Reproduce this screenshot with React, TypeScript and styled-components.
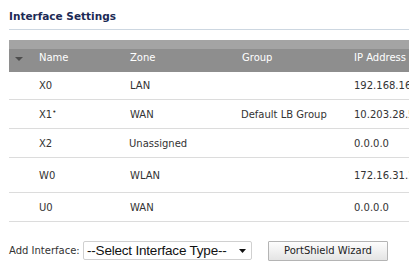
import React from "react";
import styled, { createGlobalStyle } from "styled-components";

const Global = createGlobalStyle`
  html, body { margin: 0; padding: 0; background: #ffffff; }
  body { font-family: "DejaVu Sans", Tahoma, sans-serif; }
`;

const Page = styled.div`
  width: 409px;
  height: 278px;
  padding-left: 9px;
  box-sizing: border-box;
  overflow: hidden;
`;

const Title = styled.h1`
  margin: 0;
  padding-top: 9px;
  height: 20px;
  box-sizing: content-box;
  border-bottom: 1px solid #cdd7e1;
  font-size: 10.5px;
  font-weight: bold;
  line-height: 14px;
  color: #1c2a55;
`;

const Table = styled.div`
  margin-top: 10px;
`;

const cols = "30px 91px 112px 112px 1fr";

const HeaderRow = styled.div`
  display: grid;
  grid-template-columns: ${cols};
  align-items: center;
  height: 32px;
  padding-top: 2px;
  box-sizing: border-box;
  background: linear-gradient(#a4a4a4 0, #a4a4a4 9px, #8e8e8e 9px, #8e8e8e 100%);
  color: #ffffff;
  font-size: 10px;
  white-space: nowrap;
`;

const SortIcon = styled.svg`
  margin-left: 6px;
  margin-top: 4px;
  display: block;
`;

const Row = styled.div<{ $h: number }>`
  display: grid;
  grid-template-columns: ${cols};
  align-items: center;
  height: ${(p) => p.$h}px;
  box-sizing: border-box;
  border-bottom: 1px solid #dcdcdc;
  color: #333333;
  font-size: 10px;
  white-space: nowrap;
  overflow: hidden;
`;

const Cell = styled.span<{ $shift?: number }>`
  margin-left: ${(p) => p.$shift ?? 0}px;
`;

const Controls = styled.div`
  display: flex;
  align-items: center;
  margin-top: 19px;
  height: 19px;
`;

const Label = styled.span`
  font-size: 10px;
  color: #333333;
  width: 74px;
`;

const SelectBox = styled.div`
  display: flex;
  align-items: center;
  justify-content: space-between;
  width: 169px;
  height: 19px;
  box-sizing: border-box;
  border: 1px solid #d0d0d0;
  border-radius: 2px;
  padding: 0 5px 0 3px;
  font-family: "Liberation Sans", Arial, sans-serif;
  font-size: 13.5px;
  color: #111111;
  letter-spacing: -0.2px;
`;

const Button = styled.button`
  margin-left: 16px;
  width: 120px;
  height: 20px;
  box-sizing: border-box;
  border: 1px solid #b4b4b4;
  border-radius: 1px;
  background: linear-gradient(#fdfdfd, #e4e4e4);
  font-family: "DejaVu Sans", Tahoma, sans-serif;
  font-size: 10px;
  color: #222222;
  padding: 0;
`;

const rows = [
  { name: "X0", zone: "LAN", group: "", ip: "192.168.168.168", h: 28 },
  { name: "X1*", zone: "WAN", group: "Default LB Group", ip: "10.203.28.55", h: 29 },
  { name: "X2", zone: "Unassigned", group: "", ip: "0.0.0.0", h: 29 },
  { name: "W0", zone: "WLAN", group: "", ip: "172.16.31.1", h: 35 },
  { name: "U0", zone: "WAN", group: "", ip: "0.0.0.0", h: 29 },
];

export default function App() {
  return (
    <Page>
      <Global />
      <Title>Interface Settings</Title>
      <Table>
        <HeaderRow>
          <SortIcon width="8" height="4" viewBox="0 0 8 4">
            <path d="M0 0 H8 L4 4 Z" fill="#4d4d4d" />
          </SortIcon>
          <Cell>Name</Cell>
          <Cell>Zone</Cell>
          <Cell>Group</Cell>
          <Cell>IP Address</Cell>
        </HeaderRow>
        {rows.map((r) => (
          <Row key={r.name} $h={r.h}>
            <span />
            <Cell>{r.name === "X1*" ? <>X1<sup style={{ fontSize: 7 }}>•</sup></> : r.name}</Cell>
            <Cell $shift={r.zone === "Unassigned" ? -1 : 0}>{r.zone}</Cell>
            <Cell $shift={-1}>{r.group}</Cell>
            <Cell>{r.ip}</Cell>
          </Row>
        ))}
      </Table>
      <Controls>
        <Label>Add Interface:</Label>
        <SelectBox>
          <span>--Select Interface Type--</span>
          <svg width="7" height="4" viewBox="0 0 7 4">
            <path d="M0 0 H7 L3.5 4 Z" fill="#111" />
          </svg>
        </SelectBox>
        <Button>PortShield Wizard</Button>
      </Controls>
    </Page>
  );
}
